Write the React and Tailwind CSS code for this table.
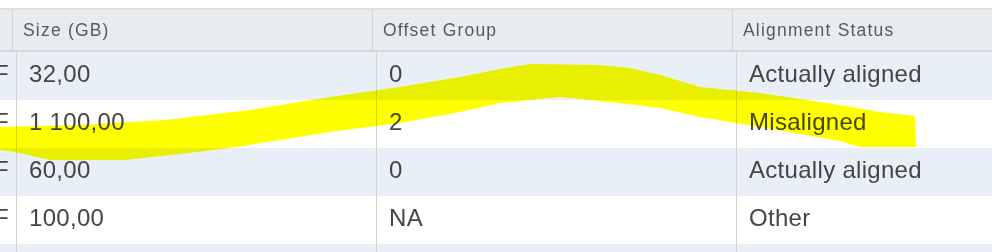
import React from "react";

const rows = [
  ["32,00", "0", "Actually aligned"],
  ["1 100,00", "2", "Misaligned"],
  ["60,00", "0", "Actually aligned"],
  ["100,00", "NA", "Other"],
  ["", "", ""],
];

const font = { fontFamily: '"Liberation Sans", Arial, sans-serif' };

export default function App() {
  return (
    <div
      className="relative w-[992px] h-[252px] overflow-hidden bg-white pt-[8px]"
      style={font}
    >
      {/* header */}
      <div className="flex h-[44px] border-t-2 border-b-2 border-t-[#dfdfdf] border-b-[#d6d6d6] bg-[#e9ecef] text-[17.5px] tracking-[1.2px] text-[#5a5a5a]">
        <div className="w-[12px] shrink-0" />
        <div className="w-[360px] shrink-0 border-l border-[#d2d2d2] pl-[10px] flex items-center">
          Size (GB)
        </div>
        <div className="w-[360px] shrink-0 border-l border-[#d2d2d2] pl-[10px] flex items-center">
          Offset Group
        </div>
        <div className="flex-1 border-l border-[#d2d2d2] pl-[10px] flex items-center">
          Alignment Status
        </div>
      </div>
      {/* body */}
      {rows.map((r, i) => (
        <div
          key={i}
          className={`flex h-[48px] text-[24px] tracking-[0.3px] text-[#454545] ${
            i % 2 === 0 ? "bg-[#e8eff7]" : "bg-white"
          }`}
        >
          <div className="w-[16px] shrink-0 overflow-hidden flex items-center justify-end pr-[7px] pb-[4px]">
            {i < 4 ? "F" : ""}
          </div>
          <div className="w-[360px] shrink-0 border-l border-[#d2d2d2] pl-[12px] flex items-center pb-[4px]">
            {r[0]}
          </div>
          <div className="w-[360px] shrink-0 border-l border-[#d2d2d2] pl-[12px] flex items-center pb-[4px]">
            {r[1]}
          </div>
          <div className="flex-1 border-l border-[#d2d2d2] pl-[12px] flex items-center pb-[4px]">
            {r[2]}
          </div>
        </div>
      ))}
      {/* highlighter stroke */}
      <svg
        className="absolute inset-0 pointer-events-none mix-blend-multiply"
        width="992"
        height="252"
        viewBox="0 0 992 252"
      >
        <path
          fill="#ffff00"
          d="M0 127 L80 125 L165 120 L250 110 L330 97 L400 87 L460 77 L500 69 L530 64 L600 65 L630 68 L660 75 L700 87 L760 93 L800 99 L840 105 L880 112 L915 116 L916 147 L860 147 L840 141 L800 134 L760 127 L700 117 L660 108 L610 102 L560 97 L500 103 L460 112 L400 123 L330 132 L280 140 L230 148 L180 154 L125 160 L50 160 L15 152 L0 150 Z"
        />
      </svg>
    </div>
  );
}
